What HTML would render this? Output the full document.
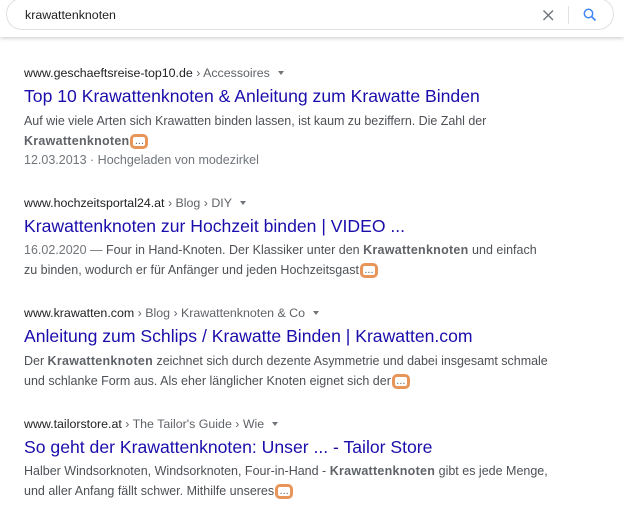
<!DOCTYPE html>
<html><head><meta charset="utf-8">
<style>
html,body{margin:0;padding:0;background:#fff}
body{width:624px;height:516px;position:relative;overflow:hidden;font-family:"Liberation Sans",sans-serif;filter:blur(.3px)}
.l{position:absolute;white-space:nowrap;left:24px}
.u{font-size:12.4px;color:#202124;height:16px;line-height:16px}
.u span{color:#5f6368}
.u i{display:inline-block;width:0;height:0;border-left:3.5px solid transparent;border-right:3.5px solid transparent;border-top:4px solid #70757a;margin-left:8px;vertical-align:2px}
.t{font-size:17.6px;color:#1a0dab;height:24px;line-height:24px}
.s{font-size:12.5px;color:#4d5156;height:18px;line-height:18px}
.s b{color:#5f6368;letter-spacing:.27px}
.d{display:inline-block;position:relative;top:-5px;box-sizing:border-box;width:18px;height:15px;border:3px solid #e8955a;border-radius:5px;background:#fff;vertical-align:-4px;margin-left:1px;text-align:center;line-height:9px;font-size:11px;color:#5f6368;letter-spacing:0}
#bar{position:absolute;left:0;top:0;width:624px;height:37px;background:#fff;box-shadow:0 1px 4px rgba(0,0,0,.22)}
#box{position:absolute;left:6px;top:-2px;width:606px;height:30px;border:1px solid #dfe1e5;border-radius:16px;background:#fff}
</style></head><body>
<div id="bar"><div id="box"></div>
<div class="l" style="left:25px;top:7px;font-size:12.4px;line-height:16px;color:#202124">krawattenknoten</div>
<svg style="position:absolute;left:0;top:0" width="624" height="37">
<path d="M543.5 10.5L553 20M553 10.5L543.5 20" stroke="#70757a" stroke-width="1.4" fill="none"/>
<path d="M568.5 6V24" stroke="#dfe1e5" stroke-width="1"/>
<circle cx="588.5" cy="13.5" r="4.2" stroke="#4285f4" stroke-width="1.5" fill="none"/>
<path d="M591.5 16.5L595.5 20.5" stroke="#4285f4" stroke-width="1.7" fill="none"/>
</svg></div>

<div class="l u" style="top:65px">www.geschaeftsreise-top10.de<span> › Accessoires</span><i></i></div>
<div class="l t" style="top:84px">Top 10 Krawattenknoten &amp; Anleitung zum Krawatte Binden</div>
<div class="l s" style="top:112px;letter-spacing:-.035px">Auf wie viele Arten sich Krawatten binden lassen, ist kaum zu beziffern. Die Zahl der</div>
<div class="l s" style="top:132px"><b>Krawattenknoten</b><span class="d">...</span></div>
<div class="l s" style="top:151px;color:#70757a">12.03.2013 · Hochgeladen von modezirkel</div>

<div class="l u" style="top:195px">www.hochzeitsportal24.at<span> › Blog › DIY</span><i></i></div>
<div class="l t" style="top:214px">Krawattenknoten zur Hochzeit binden | VIDEO ...</div>
<div class="l s" style="top:241px"><span style="color:#70757a">16.02.2020 — </span>Four in Hand-Knoten. Der Klassiker unter den <b>Krawattenknoten</b> und einfach</div>
<div class="l s" style="top:261px">zu binden, wodurch er für Anfänger und jeden Hochzeitsgast<span class="d">...</span></div>

<div class="l u" style="top:305px">www.krawatten.com<span> › Blog › Krawattenknoten &amp; Co</span><i></i></div>
<div class="l t" style="top:324px">Anleitung zum Schlips / Krawatte Binden | Krawatten.com</div>
<div class="l s" style="top:352px;letter-spacing:-.02px">Der <b>Krawattenknoten</b> zeichnet sich durch dezente Asymmetrie und dabei insgesamt schmale</div>
<div class="l s" style="top:372px">und schlanke Form aus. Als eher länglicher Knoten eignet sich der<span class="d">...</span></div>

<div class="l u" style="top:416px">www.tailorstore.at<span> › The Tailor's Guide › Wie</span><i></i></div>
<div class="l t" style="top:435px">So geht der Krawattenknoten: Unser ... - Tailor Store</div>
<div class="l s" style="top:462px">Halber Windsorknoten, Windsorknoten, Four-in-Hand - <b>Krawattenknoten</b> gibt es jede Menge,</div>
<div class="l s" style="top:482px">und aller Anfang fällt schwer. Mithilfe unseres<span class="d">...</span></div>
</body></html>
